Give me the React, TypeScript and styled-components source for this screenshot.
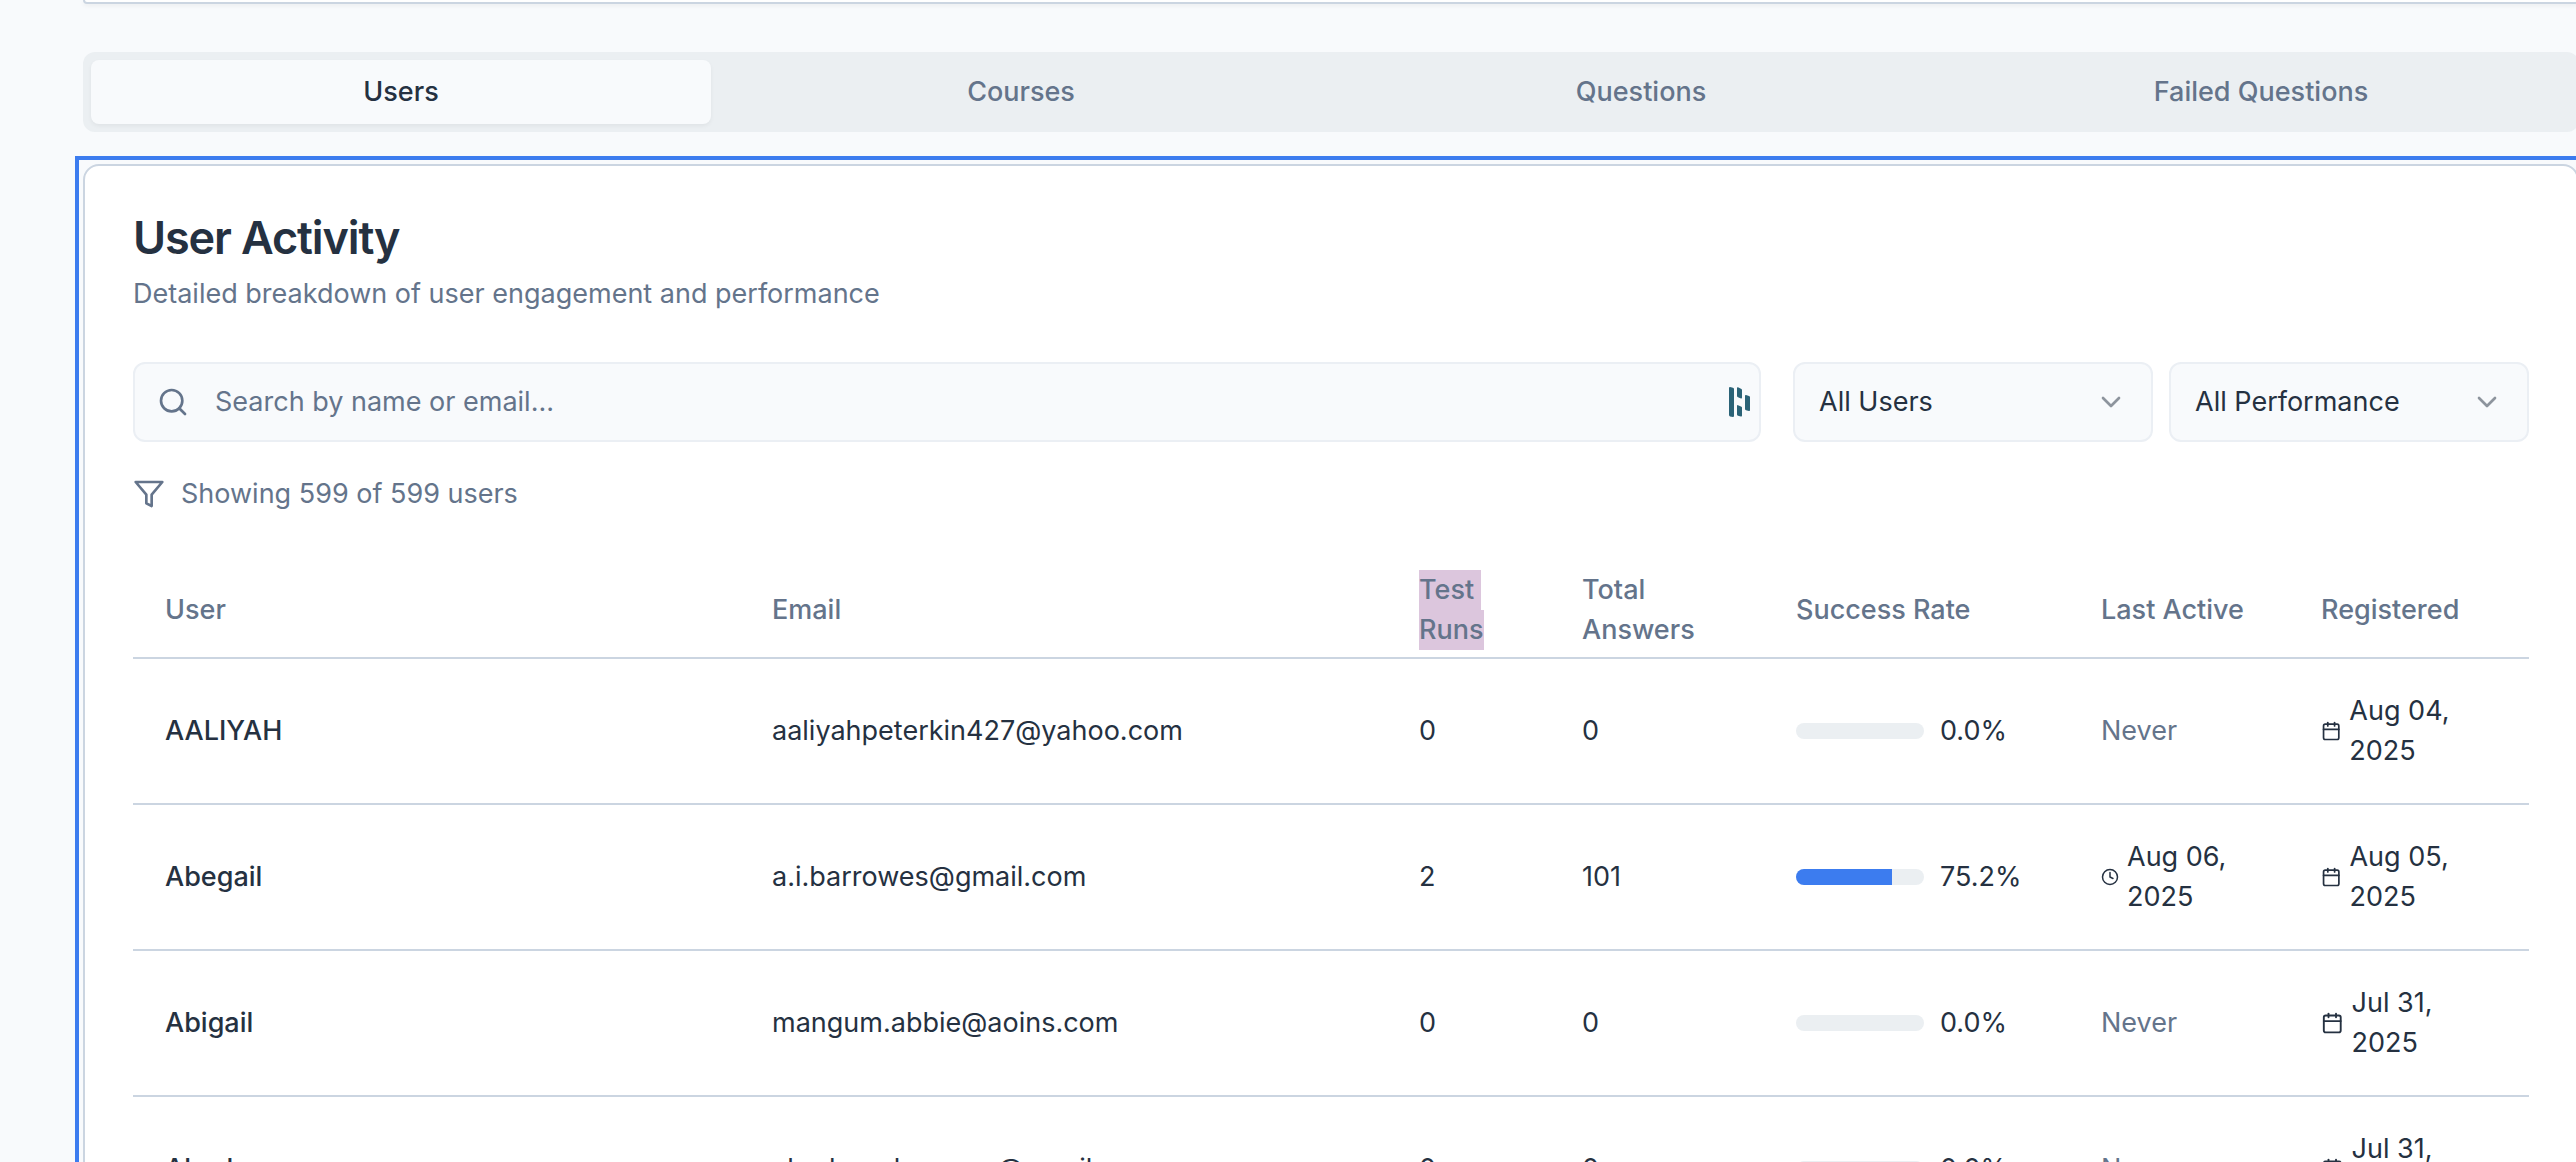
import React from "react";
import styled, { createGlobalStyle } from "styled-components";
import { Calendar, ChevronDown, Clock, Search } from "lucide-react";

const color = {
  page: "#f8fafc",
  surface: "#ffffff",
  muted: "#ebeff2",
  line: "#cbd5e1",
  field: "#ebeff4",
  text: "#253141",
  textMuted: "#64748b",
  primary: "#3c7cef",
  selection: "#dcc6dd",
};

const GlobalStyle = createGlobalStyle`
  *, *::before, *::after { box-sizing: border-box; }
  html { overflow: hidden; }
  body {
    margin: 0;
    height: 100vh;
    overflow: hidden;
    background: ${color.page};
    color: ${color.text};
    font-family: Inter, "Liberation Sans", sans-serif;
    font-size: 27px;
    line-height: 40px;
    -webkit-font-smoothing: antialiased;
  }
  button, input, select { font: inherit; color: inherit; margin: 0; }
`;

const Page = styled.main`
  display: flex;
  flex-direction: column;
  margin: 0 -3px 0 83px;
`;

const SummaryCard = styled.section`
  height: 4px;
  margin-bottom: 48px;
  background: ${color.surface};
  border: 2px solid ${color.line};
  border-top: 0;
  border-radius: 0 0 16px 16px;
  box-shadow: 0 2px 4px rgba(0, 0, 0, 0.05);
`;

const TabList = styled.div`
  display: grid;
  grid-template-columns: repeat(4, 1fr);
  height: 80px;
  padding: 8px;
  margin-bottom: 32px;
  background: ${color.muted};
  border-radius: 12px;
`;

const Tab = styled.button<{ $active?: boolean }>`
  padding: 0 24px;
  border: 0;
  border-radius: 8px;
  font-weight: 500;
  background: ${(p) => (p.$active ? color.page : "transparent")};
  color: ${(p) => (p.$active ? color.text : color.textMuted)};
  box-shadow: ${(p) => (p.$active ? "0 2px 4px rgba(0, 0, 0, 0.05)" : "none")};
`;

const Panel = styled.section`
  padding: 48px;
  background: ${color.surface};
  border: 2px solid ${color.line};
  border-radius: 16px;
  outline: none;
`;

const FocusFrame = styled.div`
  margin: -8px -8px 0;
  padding: 4px;
  border: 4px solid ${color.primary};
`;

const PanelHeader = styled.header`
  display: flex;
  flex-direction: column;
  gap: 12px;
  margin-bottom: 48px;
`;

const Title = styled.h3`
  margin: 0;
  font-size: 45px;
  line-height: 48px;
  font-weight: 600;
  letter-spacing: -0.025em;
`;

const Subtitle = styled.p`
  margin: 0;
  color: ${color.textMuted};
`;

const Filters = styled.div`
  display: flex;
  gap: 32px;
  margin-bottom: 32px;
`;

const SearchBox = styled.label`
  display: flex;
  flex: 1;
  align-items: center;
  gap: 26px;
  height: 80px;
  padding: 0 8px 0 22px;
  background: ${color.page};
  border: 2px solid ${color.field};
  border-radius: 12px;
  color: ${color.textMuted};
`;

const SearchInput = styled.input`
  flex: 1;
  min-width: 0;
  padding: 0;
  border: 0;
  outline: 0;
  background: transparent;
  &::placeholder { color: ${color.textMuted}; opacity: 1; }
`;

const SelectGroup = styled.div`
  display: flex;
  gap: 16px;
`;

const SelectBox = styled.div`
  display: grid;
  align-items: center;
  width: 360px;
  height: 80px;
  & > * { grid-area: 1 / 1; }
  & > svg {
    justify-self: end;
    margin-right: 26px;
    opacity: 0.5;
    pointer-events: none;
  }
`;

const Select = styled.select`
  appearance: none;
  width: 100%;
  height: 100%;
  padding: 0 64px 0 24px;
  background: ${color.page};
  border: 2px solid ${color.field};
  border-radius: 12px;
`;

const ResultCount = styled.div`
  display: flex;
  align-items: center;
  gap: 16px;
  margin-bottom: 48px;
  color: ${color.textMuted};
`;

const Table = styled.table`
  width: 100%;
  table-layout: fixed;
  border-collapse: collapse;
`;

const Col = styled.col<{ $w: number }>`
  width: ${(p) => p.$w}px;
`;

const Row = styled.tr`
  border-bottom: 2px solid ${color.line};
`;

const HeadCell = styled.th`
  height: 96px;
  padding: 0 32px;
  text-align: left;
  vertical-align: middle;
  font-weight: 500;
  color: ${color.textMuted};
`;

const Cell = styled.td<{ $strong?: boolean }>`
  padding: 32px;
  vertical-align: middle;
  font-weight: ${(p) => (p.$strong ? 500 : 400)};
`;

const SelectedWord = styled.span`
  display: inline-block;
  vertical-align: top;
  white-space: pre;
  background: ${color.selection};
`;

const Rate = styled.div`
  display: flex;
  align-items: center;
  gap: 16px;
`;

const Track = styled.div`
  width: 128px;
  height: 16px;
  overflow: hidden;
  border-radius: 8px;
  background: ${color.muted};
`;

const Fill = styled.div`
  height: 100%;
  background: ${color.primary};
`;

const DateLine = styled.div`
  display: flex;
  align-items: center;
  & > svg { margin-right: 8px; }
`;

const Never = styled.span`
  color: ${color.textMuted};
`;

function FunnelIcon() {
  return (
    <svg width="32" height="32" viewBox="0 0 24 24" fill="none" stroke="currentColor" strokeWidth="2" strokeLinecap="round" strokeLinejoin="round" aria-hidden="true">
      <polygon points="22 3 2 3 10 12.46 10 19 14 21 14 12.46 22 3" />
    </svg>
  );
}

function PasswordManagerIcon() {
  return (
    <svg width="22" height="30" viewBox="0 0 22 30" fill="#2b6377" aria-hidden="true">
      <path d="M0 1Q0 0 1 0L4 .8Q5 1 5 2V29Q5 30 4 30L1 29.4Q0 29 0 28Z" />
      <path d="M8 1Q8 0 9 .3L12 1.8Q13 2.3 13 3.2V10.5Q13 11.8 12 11.4L9 10.2Q8 9.8 8 9Z" />
      <path d="M8 19Q8 17.8 9 18.2L12 19.4Q13 19.8 13 20.6V28.5Q13 29.7 12 29.4L9 28.8Q8 28.5 8 27.5Z" />
      <path d="M16 9Q16 7.8 17 8.1L20 8.9Q21 9.2 21 10V23Q21 24.2 20 23.9L17 23.2Q16 22.9 16 22Z" />
    </svg>
  );
}

type User = {
  name: string;
  email: string;
  runs: number;
  answers: number;
  rate: number;
  lastActive?: string;
  registered: string;
};

const users: User[] = [
  { name: "AALIYAH", email: "aaliyahpeterkin427@yahoo.com", runs: 0, answers: 0, rate: 0, registered: "Aug 04, 2025" },
  { name: "Abegail", email: "a.i.barrowes@gmail.com", runs: 2, answers: 101, rate: 75.2, lastActive: "Aug 06, 2025", registered: "Aug 05, 2025" },
  { name: "Abigail", email: "mangum.abbie@aoins.com", runs: 0, answers: 0, rate: 0, registered: "Jul 31, 2025" },
  { name: "Abraham", email: "abrahamdmoreno@gmail.com", runs: 0, answers: 0, rate: 0, registered: "Jul 31, 2025" },
];

const tabs = ["Users", "Courses", "Questions", "Failed Questions"];
const columnWidths = [607, 647, 163, 214, 305, 220, 240];

export default function App() {
  return (
    <>
      <GlobalStyle />
      <Page>
        <SummaryCard />
        <TabList role="tablist">
          {tabs.map((t, i) => (
            <Tab key={t} type="button" role="tab" aria-selected={i === 0} $active={i === 0}>
              {t}
            </Tab>
          ))}
        </TabList>
        <FocusFrame>
          <Panel role="tabpanel" tabIndex={0}>
            <PanelHeader>
              <Title>User Activity</Title>
              <Subtitle>Detailed breakdown of user engagement and performance</Subtitle>
            </PanelHeader>
            <Filters>
              <SearchBox>
                <Search size={32} />
                <SearchInput type="text" placeholder="Search by name or email..." aria-label="Search by name or email" />
                <PasswordManagerIcon />
              </SearchBox>
              <SelectGroup>
                <SelectBox>
                  <Select aria-label="Users filter" defaultValue="all">
                    <option value="all">All Users</option>
                  </Select>
                  <ChevronDown size={32} />
                </SelectBox>
                <SelectBox>
                  <Select aria-label="Performance filter" defaultValue="all">
                    <option value="all">All Performance</option>
                  </Select>
                  <ChevronDown size={32} />
                </SelectBox>
              </SelectGroup>
            </Filters>
            <ResultCount>
              <FunnelIcon />
              <span>Showing 599 of 599 users</span>
            </ResultCount>
            <Table>
              <colgroup>
                {columnWidths.map((w, i) => (
                  <Col key={i} $w={w} />
                ))}
              </colgroup>
              <thead>
                <Row>
                  <HeadCell scope="col">User</HeadCell>
                  <HeadCell scope="col">Email</HeadCell>
                  <HeadCell scope="col">
                    <SelectedWord>{"Test "}</SelectedWord>
                    <SelectedWord>Runs</SelectedWord>
                  </HeadCell>
                  <HeadCell scope="col">Total Answers</HeadCell>
                  <HeadCell scope="col">Success Rate</HeadCell>
                  <HeadCell scope="col">Last Active</HeadCell>
                  <HeadCell scope="col">Registered</HeadCell>
                </Row>
              </thead>
              <tbody>
                {users.map((u) => (
                  <Row key={u.name}>
                    <Cell $strong>{u.name}</Cell>
                    <Cell>{u.email}</Cell>
                    <Cell>{u.runs}</Cell>
                    <Cell>{u.answers}</Cell>
                    <Cell>
                      <Rate>
                        <Track>
                          <Fill style={{ width: `${u.rate}%` }} />
                        </Track>
                        <span>{u.rate.toFixed(1)}%</span>
                      </Rate>
                    </Cell>
                    <Cell>
                      {u.lastActive ? (
                        <DateLine>
                          <Clock size={24} />
                          <span>{u.lastActive}</span>
                        </DateLine>
                      ) : (
                        <Never>Never</Never>
                      )}
                    </Cell>
                    <Cell>
                      <DateLine>
                        <Calendar size={24} />
                        <span>{u.registered}</span>
                      </DateLine>
                    </Cell>
                  </Row>
                ))}
              </tbody>
            </Table>
          </Panel>
        </FocusFrame>
      </Page>
    </>
  );
}
